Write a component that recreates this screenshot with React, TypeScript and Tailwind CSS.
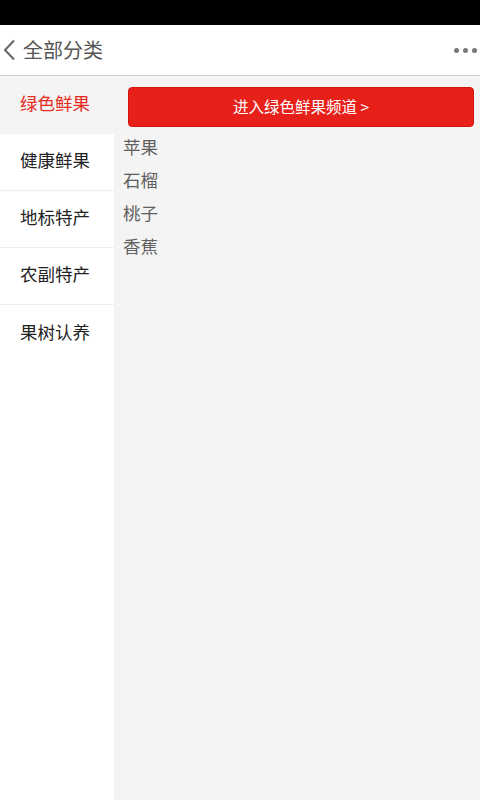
import React from "react";

const cats = ["绿色鲜果", "健康鲜果", "地标特产", "农副特产", "果树认养"];
const fruits = ["苹果", "石榴", "桃子", "香蕉"];

export default function App() {
  return (
    <div
      className="w-[480px] h-[800px] flex flex-col bg-white overflow-hidden"
      style={{ fontFamily: '"Noto Sans CJK SC", "Noto Sans", sans-serif' }}
    >
      <div className="h-[25px] bg-black shrink-0" />
      <div className="h-[51px] shrink-0 flex items-center border-b border-[#cfcfcf] bg-white">
        <svg width="14" height="22" viewBox="0 0 14 22" className="ml-[3px]">
          <path d="M11 1.5 L2 11 L11 20.5" fill="none" stroke="#666" strokeWidth="2" />
        </svg>
        <span className="ml-[6px] text-[20px] text-[#555] leading-none">全部分类</span>
        <div className="ml-auto mr-[3px] flex gap-[4px] items-center">
          <span className="w-[5px] h-[5px] rounded-full bg-[#777]" />
          <span className="w-[5px] h-[5px] rounded-full bg-[#777]" />
          <span className="w-[5px] h-[5px] rounded-full bg-[#777]" />
        </div>
      </div>
      <div className="flex flex-1 min-h-0">
        <div className="w-[114px] shrink-0 bg-white flex flex-col">
          {cats.map((c, i) => (
            <div
              key={c}
              className={
                i === 0
                  ? "h-[58px] flex items-center pl-[20px] pb-[3px] text-[17.5px] text-[#e52a22] bg-[#f4f4f4]"
                  : i === cats.length - 1
                  ? "h-[57px] flex items-center pl-[20px] pb-[3px] text-[17.5px] text-[#222]"
                  : "h-[57px] flex items-center pl-[20px] pb-[3px] text-[17.5px] text-[#222] border-b border-[#eeeeee]"
              }
            >
              {c}
            </div>
          ))}
        </div>
        <div className="flex-1 bg-[#f4f4f4] flex flex-col pt-[11px]">
          <div className="ml-[14px] mr-[6px] h-[40px] rounded-[4px] bg-[#e8201a] border border-[#d41510] flex items-center justify-center text-white text-[15.5px]">
            进入绿色鲜果频道 &gt;
          </div>
          <div className="mt-[4px] pl-[9px] flex flex-col">
            {fruits.map((f) => (
              <div key={f} className="h-[33px] flex items-center text-[17.5px] text-[#606060]">
                {f}
              </div>
            ))}
          </div>
        </div>
      </div>
    </div>
  );
}
